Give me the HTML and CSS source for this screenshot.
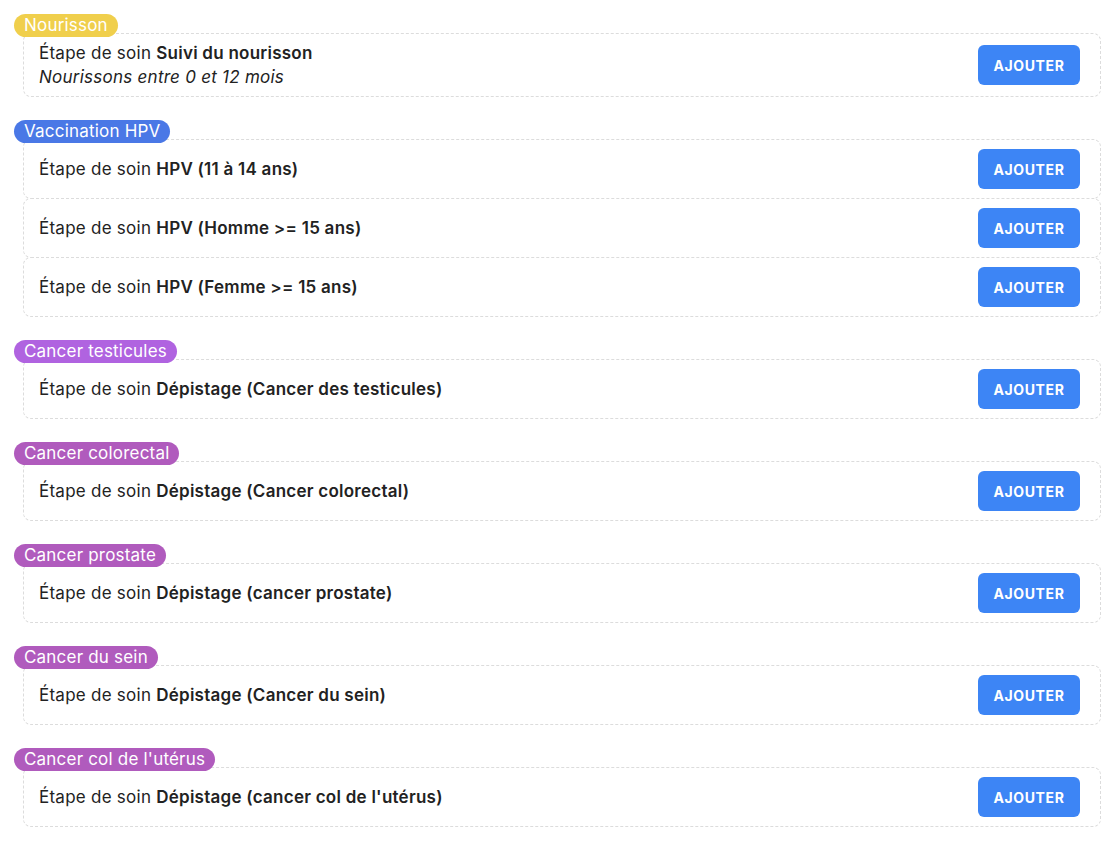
FILE: index.html
```html
<!DOCTYPE html>
<html lang="fr">
<head>
  <meta charset="UTF-8" />
  <meta name="viewport" content="width=device-width, initial-scale=1.0" />
  <title>Étapes de soin</title>
  <link rel="stylesheet" href="styles.css">
</head>
<body>
  <div class="list">
    <div class="group">
      <span class="badge badge-yellow">Nourisson</span>
      <div class="step">
        <div class="step-text">
          <div>Étape de soin <b>Suivi du nourisson</b></div>
          <div class="step-note">Nourissons entre 0 et 12 mois</div>
        </div>
        <button class="add-btn">Ajouter</button>
      </div>
    </div>

    <div class="group">
      <span class="badge badge-blue">Vaccination HPV</span>
      <div class="step">
        <div class="step-text">Étape de soin <b>HPV (11 à 14 ans)</b></div>
        <button class="add-btn">Ajouter</button>
      </div>
      <div class="step">
        <div class="step-text">Étape de soin <b>HPV (Homme &gt;= 15 ans)</b></div>
        <button class="add-btn">Ajouter</button>
      </div>
      <div class="step">
        <div class="step-text">Étape de soin <b>HPV (Femme &gt;= 15 ans)</b></div>
        <button class="add-btn">Ajouter</button>
      </div>
    </div>

    <div class="group">
      <span class="badge badge-violet">Cancer testicules</span>
      <div class="step">
        <div class="step-text">Étape de soin <b>Dépistage (Cancer des testicules)</b></div>
        <button class="add-btn">Ajouter</button>
      </div>
    </div>

    <div class="group">
      <span class="badge badge-purple">Cancer colorectal</span>
      <div class="step">
        <div class="step-text">Étape de soin <b>Dépistage (Cancer colorectal)</b></div>
        <button class="add-btn">Ajouter</button>
      </div>
    </div>

    <div class="group">
      <span class="badge badge-purple">Cancer prostate</span>
      <div class="step">
        <div class="step-text">Étape de soin <b>Dépistage (cancer prostate)</b></div>
        <button class="add-btn">Ajouter</button>
      </div>
    </div>

    <div class="group">
      <span class="badge badge-purple">Cancer du sein</span>
      <div class="step">
        <div class="step-text">Étape de soin <b>Dépistage (Cancer du sein)</b></div>
        <button class="add-btn">Ajouter</button>
      </div>
    </div>

    <div class="group">
      <span class="badge badge-purple">Cancer col de l'utérus</span>
      <div class="step">
        <div class="step-text">Étape de soin <b>Dépistage (cancer col de l'utérus)</b></div>
        <button class="add-btn">Ajouter</button>
      </div>
    </div>
  </div>
</body>
</html>
```

FILE: styles.css
```css
body {
  margin: 0;
  font-family: 'Inter', 'Lato', sans-serif;
  background: #fff;
  color: #222;
}
.list {
  display: flex;
  flex-direction: column;
  gap: 23px;
  padding: 14px 13px 14px 14px;
}
.group {
  display: flex;
  flex-direction: column;
  align-items: flex-start;
}
.badge {
  position: relative;
  z-index: 1;
  display: inline-block;
  height: 23px;
  line-height: 23px;
  padding: 0 10px;
  margin-bottom: -4px;
  border-radius: 12px;
  color: #fff;
  font-size: 17px;
  letter-spacing: 0.2px;
}
.badge-yellow { background: #f0cf4c; }
.badge-blue { background: #4a78e6; }
.badge-violet { background: #b063e0; }
.badge-purple { background: #b05bbd; }
.step {
  display: flex;
  align-items: center;
  justify-content: space-between;
  box-sizing: border-box;
  width: calc(100% - 9px);
  margin-left: 9px;
  padding: 7px 20px 7px 15px;
  border: 1px dashed #dcdcdc;
  border-radius: 8px;
  background: #fff;
  font-size: 17px;
  line-height: 24px;
  letter-spacing: 0.25px;
}
.step + .step {
  margin-top: -1px;
}
.step-text b {
  font-weight: 600;
}
.step-note {
  font-style: italic;
}
.add-btn {
  height: 40px;
  width: 102px;
  margin: 2px 0;
  border: none;
  border-radius: 6px;
  background: #3d85f5;
  color: #fff;
  font-family: inherit;
  font-size: 14px;
  font-weight: 700;
  letter-spacing: 0.6px;
  text-transform: uppercase;
  cursor: pointer;
}
```
